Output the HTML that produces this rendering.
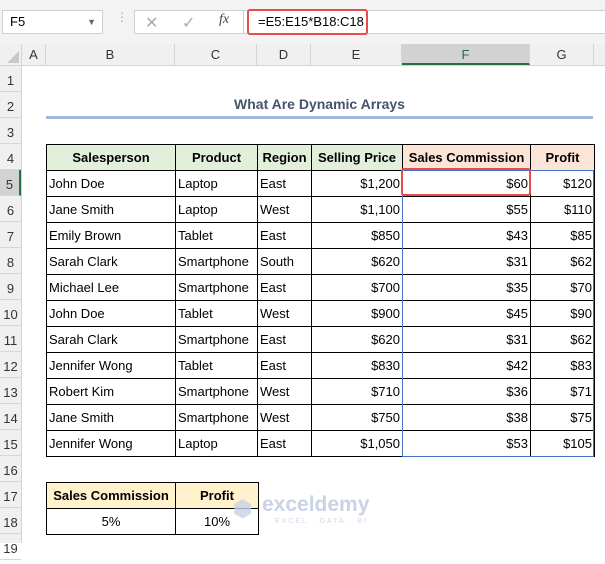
<!DOCTYPE html>
<html><head><meta charset="utf-8"><style>
*{margin:0;padding:0;box-sizing:border-box}
body{width:605px;height:543px;overflow:hidden;background:#fff;font-family:"Liberation Sans",sans-serif;position:relative;color:#000}
.abs{position:absolute}
.top{left:0;top:0;width:605px;height:44px;background:#f3f3f3}
.colh{left:0;top:44px;width:605px;height:22px;background:#f0f0f0;border-bottom:1px solid #d4d4d4}
.ch{position:absolute;top:0;height:21px;line-height:21px;text-align:center;font-size:13px;color:#333;border-right:1px solid #d4d4d4}
.rowh{left:0;top:66px;width:22px;height:477px;background:#f0f0f0;border-right:1px solid #d4d4d4}
.rn{position:absolute;left:0;width:21px;height:26px;line-height:30px;text-align:center;font-size:13px;color:#333;border-bottom:1px solid #d8d8d8}
table{border-collapse:collapse;position:absolute;table-layout:fixed}
td{border:1px solid #000;height:26px;font-size:13px;padding:0 2px;white-space:nowrap;overflow:hidden}
.r{text-align:right}.c{text-align:center}
th{border:1px solid #000;height:26px;font-size:13px;font-weight:bold;text-align:center;white-space:nowrap;overflow:hidden}
.g{background:#e2efda}.p{background:#fce4d6}.y{background:#fff2cc}
</style></head><body>
<div class="abs top"></div>
<div class="abs" style="left:2px;top:10px;width:101px;height:24px;background:#fff;border:1px solid #d0d0d0;font-size:13px;line-height:22px;padding-left:7px">F5<span style="position:absolute;right:6px;top:0;font-size:9px;color:#666">▼</span></div>
<div class="abs" style="left:116px;top:14px;color:#aaa;font-size:12px;line-height:6px">⋮</div>
<div class="abs" style="left:134px;top:10px;width:110px;height:24px;background:#fff;border:1px solid #d0d0d0"></div>
<div class="abs" style="left:145px;top:13px;color:#aaa;font-size:16px">✕</div>
<div class="abs" style="left:182px;top:13px;color:#aaa;font-size:16px">✓</div>
<div class="abs" style="left:219px;top:12px;color:#444;font-size:14px;font-style:italic;font-family:'Liberation Serif',serif">fx</div>
<div class="abs" style="left:244px;top:10px;width:361px;height:24px;background:#fff;border-top:1px solid #d0d0d0;border-bottom:1px solid #d0d0d0"></div>
<div class="abs" style="left:247px;top:9px;width:121px;height:26px;border:2px solid #e84c4c;border-radius:3px;font-size:13px;line-height:22px;padding-left:9px;white-space:nowrap">=E5:E15*B18:C18</div>

<div class="abs colh">
<div class="ch" style="left:0;width:22px"><span style="position:absolute;right:2px;bottom:2px;width:0;height:0;border-left:12px solid transparent;border-bottom:12px solid #c8c8c8"></span></div>
<div class="ch" style="left:22px;width:24px">A</div>
<div class="ch" style="left:46px;width:129px">B</div>
<div class="ch" style="left:175px;width:82px">C</div>
<div class="ch" style="left:257px;width:54px">D</div>
<div class="ch" style="left:311px;width:91px">E</div>
<div class="ch" style="left:402px;width:128px;background:#d2d2d2;color:#217346;border-bottom:2px solid #217346">F</div>
<div class="ch" style="left:530px;width:64px">G</div>
</div>
<div class="abs rowh">
<div class="rn" style="top:0">1</div><div class="rn" style="top:26px">2</div><div class="rn" style="top:52px">3</div><div class="rn" style="top:78px">4</div><div class="rn" style="top:104px;background:#d2d2d2;border-right:2px solid #217346">5</div><div class="rn" style="top:130px">6</div><div class="rn" style="top:156px">7</div><div class="rn" style="top:182px">8</div><div class="rn" style="top:208px">9</div><div class="rn" style="top:234px">10</div><div class="rn" style="top:260px">11</div><div class="rn" style="top:286px">12</div><div class="rn" style="top:312px">13</div><div class="rn" style="top:338px">14</div><div class="rn" style="top:364px">15</div><div class="rn" style="top:390px">16</div><div class="rn" style="top:416px">17</div><div class="rn" style="top:442px">18</div><div class="rn" style="top:468px">19</div>
</div>

<div class="abs" style="left:46px;top:96px;width:547px;text-align:center;font-weight:bold;font-size:14px;color:#44546a">What Are Dynamic Arrays</div>
<div class="abs" style="left:46px;top:116px;width:547px;height:3px;background:#a4b8df"></div>

<table style="left:46px;top:144px;width:548px">
<colgroup><col style="width:129px"><col style="width:82px"><col style="width:54px"><col style="width:91px"><col style="width:128px"><col style="width:64px"></colgroup>
<tr><th class="g">Salesperson</th><th class="g">Product</th><th class="g">Region</th><th class="g">Selling Price</th><th class="p">Sales Commission</th><th class="p">Profit</th></tr>
<tr><td>John Doe</td><td>Laptop</td><td>East</td><td class="r">$1,200</td><td class="r">$60</td><td class="r">$120</td></tr>
<tr><td>Jane Smith</td><td>Laptop</td><td>West</td><td class="r">$1,100</td><td class="r">$55</td><td class="r">$110</td></tr>
<tr><td>Emily Brown</td><td>Tablet</td><td>East</td><td class="r">$850</td><td class="r">$43</td><td class="r">$85</td></tr>
<tr><td>Sarah Clark</td><td>Smartphone</td><td>South</td><td class="r">$620</td><td class="r">$31</td><td class="r">$62</td></tr>
<tr><td>Michael Lee</td><td>Smartphone</td><td>East</td><td class="r">$700</td><td class="r">$35</td><td class="r">$70</td></tr>
<tr><td>John Doe</td><td>Tablet</td><td>West</td><td class="r">$900</td><td class="r">$45</td><td class="r">$90</td></tr>
<tr><td>Sarah Clark</td><td>Smartphone</td><td>East</td><td class="r">$620</td><td class="r">$31</td><td class="r">$62</td></tr>
<tr><td>Jennifer Wong</td><td>Tablet</td><td>East</td><td class="r">$830</td><td class="r">$42</td><td class="r">$83</td></tr>
<tr><td>Robert Kim</td><td>Smartphone</td><td>West</td><td class="r">$710</td><td class="r">$36</td><td class="r">$71</td></tr>
<tr><td>Jane Smith</td><td>Smartphone</td><td>West</td><td class="r">$750</td><td class="r">$38</td><td class="r">$75</td></tr>
<tr><td>Jennifer Wong</td><td>Laptop</td><td>East</td><td class="r">$1,050</td><td class="r">$53</td><td class="r">$105</td></tr>
</table>
<div class="abs" style="left:402px;top:170px;width:192px;height:287px;border:1px solid #4472c4"></div>
<div class="abs" style="left:401px;top:168px;width:130px;height:28px;border:2px solid #e84c4c;border-radius:3px"></div>

<table style="left:46px;top:482px;width:212px">
<colgroup><col style="width:129px"><col style="width:83px"></colgroup>
<tr><th class="y">Sales Commission</th><th class="y">Profit</th></tr>
<tr><td class="c">5%</td><td class="c">10%</td></tr>
</table>
<div class="abs" style="left:233px;top:496px;color:#c9d3e6;font-size:22px;font-weight:bold;opacity:.8">⬢</div>
<div class="abs" style="left:262px;top:493px;color:#c9d3e6;font-size:21px;font-weight:bold">exceldemy</div>
<div class="abs" style="left:275px;top:518px;color:#d0d6e2;font-size:7px;letter-spacing:2px">EXCEL · DATA · BI</div>
</body></html>
